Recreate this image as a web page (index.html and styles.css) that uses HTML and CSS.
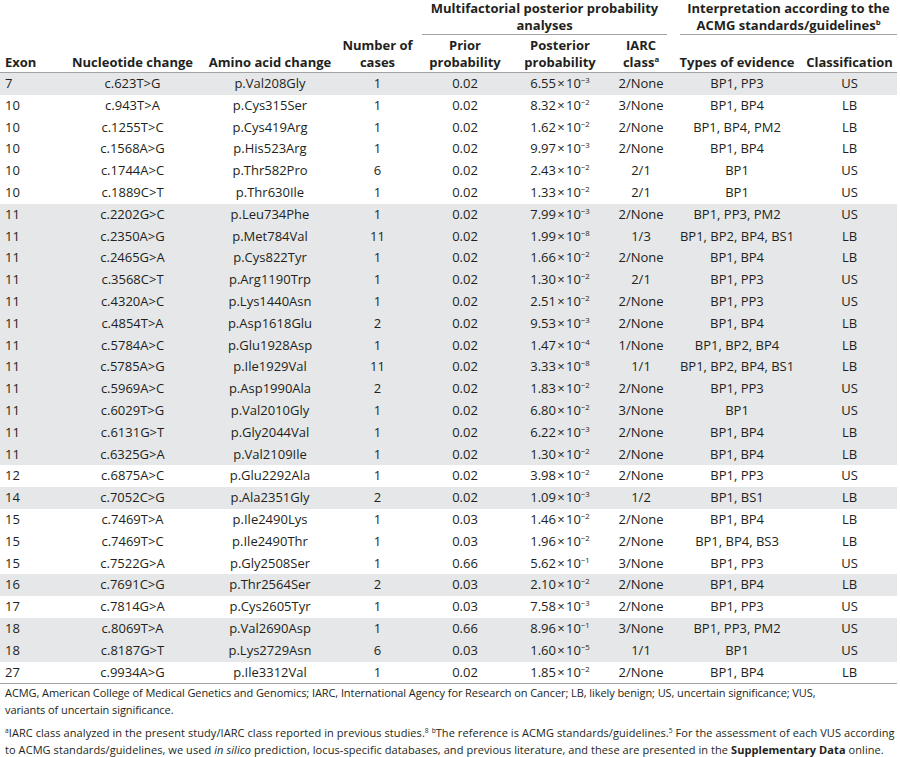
FILE: index.html
```html
<!DOCTYPE html>
<html lang="en">
<head>
<meta charset="utf-8">
<title>Table</title>
<link rel="stylesheet" href="styles.css">
</head>
<body>
<table class="tbl">
  <colgroup>
    <col class="c-exon"><col class="c-nuc"><col class="c-aa"><col class="c-num"><col class="c-prior"><col class="c-post"><col class="c-iarc"><col class="c-types"><col class="c-class">
  </colgroup>
  <thead>
    <tr class="hr1">
      <th rowspan="2" class="left bottom">Exon</th>
      <th rowspan="2" class="bottom">Nucleotide change</th>
      <th rowspan="2" class="bottom">Amino acid change</th>
      <th rowspan="2" class="bottom">Number of<br>cases</th>
      <th colspan="3" class="group"><div class="grp grp-multi">Multifactorial posterior probability<br>analyses</div></th>
      <th colspan="2" class="group"><div class="grp grp-interp">Interpretation according to the<br>ACMG standards/guidelines<sup>b</sup></div></th>
    </tr>
    <tr class="hr2">
      <th class="bottom">Prior<br>probability</th>
      <th class="bottom">Posterior<br>probability</th>
      <th class="bottom">IARC<br>class<sup>a</sup></th>
      <th class="bottom">Types of evidence</th>
      <th class="bottom">Classification</th>
    </tr>
  </thead>
  <tbody>
    <tr class="sh"><td class="left">7</td><td>c.623T&gt;G</td><td>p.Val208Gly</td><td>1</td><td>0.02</td><td>6.55&#8202;×&#8202;10<sup>−3</sup></td><td>2/None</td><td>BP1, PP3</td><td>US</td></tr>
    <tr><td class="left">10</td><td>c.943T&gt;A</td><td>p.Cys315Ser</td><td>1</td><td>0.02</td><td>8.32&#8202;×&#8202;10<sup>−2</sup></td><td>3/None</td><td>BP1, BP4</td><td>LB</td></tr>
    <tr><td class="left">10</td><td>c.1255T&gt;C</td><td>p.Cys419Arg</td><td>1</td><td>0.02</td><td>1.62&#8202;×&#8202;10<sup>−2</sup></td><td>2/None</td><td>BP1, BP4, PM2</td><td>LB</td></tr>
    <tr><td class="left">10</td><td>c.1568A&gt;G</td><td>p.His523Arg</td><td>1</td><td>0.02</td><td>9.97&#8202;×&#8202;10<sup>−3</sup></td><td>2/None</td><td>BP1, BP4</td><td>LB</td></tr>
    <tr><td class="left">10</td><td>c.1744A&gt;C</td><td>p.Thr582Pro</td><td>6</td><td>0.02</td><td>2.43&#8202;×&#8202;10<sup>−2</sup></td><td>2/1</td><td>BP1</td><td>US</td></tr>
    <tr><td class="left">10</td><td>c.1889C&gt;T</td><td>p.Thr630Ile</td><td>1</td><td>0.02</td><td>1.33&#8202;×&#8202;10<sup>−2</sup></td><td>2/1</td><td>BP1</td><td>US</td></tr>
    <tr class="sh"><td class="left">11</td><td>c.2202G&gt;C</td><td>p.Leu734Phe</td><td>1</td><td>0.02</td><td>7.99&#8202;×&#8202;10<sup>−3</sup></td><td>2/None</td><td>BP1, PP3, PM2</td><td>US</td></tr>
    <tr class="sh"><td class="left">11</td><td>c.2350A&gt;G</td><td>p.Met784Val</td><td>11</td><td>0.02</td><td>1.99&#8202;×&#8202;10<sup>−8</sup></td><td>1/3</td><td>BP1, BP2, BP4, BS1</td><td>LB</td></tr>
    <tr class="sh"><td class="left">11</td><td>c.2465G&gt;A</td><td>p.Cys822Tyr</td><td>1</td><td>0.02</td><td>1.66&#8202;×&#8202;10<sup>−2</sup></td><td>2/None</td><td>BP1, BP4</td><td>LB</td></tr>
    <tr class="sh"><td class="left">11</td><td>c.3568C&gt;T</td><td>p.Arg1190Trp</td><td>1</td><td>0.02</td><td>1.30&#8202;×&#8202;10<sup>−2</sup></td><td>2/1</td><td>BP1, PP3</td><td>US</td></tr>
    <tr class="sh"><td class="left">11</td><td>c.4320A&gt;C</td><td>p.Lys1440Asn</td><td>1</td><td>0.02</td><td>2.51&#8202;×&#8202;10<sup>−2</sup></td><td>2/None</td><td>BP1, PP3</td><td>US</td></tr>
    <tr class="sh"><td class="left">11</td><td>c.4854T&gt;A</td><td>p.Asp1618Glu</td><td>2</td><td>0.02</td><td>9.53&#8202;×&#8202;10<sup>−3</sup></td><td>2/None</td><td>BP1, BP4</td><td>LB</td></tr>
    <tr class="sh"><td class="left">11</td><td>c.5784A&gt;C</td><td>p.Glu1928Asp</td><td>1</td><td>0.02</td><td>1.47&#8202;×&#8202;10<sup>−4</sup></td><td>1/None</td><td>BP1, BP2, BP4</td><td>LB</td></tr>
    <tr class="sh"><td class="left">11</td><td>c.5785A&gt;G</td><td>p.Ile1929Val</td><td>11</td><td>0.02</td><td>3.33&#8202;×&#8202;10<sup>−8</sup></td><td>1/1</td><td>BP1, BP2, BP4, BS1</td><td>LB</td></tr>
    <tr class="sh"><td class="left">11</td><td>c.5969A&gt;C</td><td>p.Asp1990Ala</td><td>2</td><td>0.02</td><td>1.83&#8202;×&#8202;10<sup>−2</sup></td><td>2/None</td><td>BP1, PP3</td><td>US</td></tr>
    <tr class="sh"><td class="left">11</td><td>c.6029T&gt;G</td><td>p.Val2010Gly</td><td>1</td><td>0.02</td><td>6.80&#8202;×&#8202;10<sup>−2</sup></td><td>3/None</td><td>BP1</td><td>US</td></tr>
    <tr class="sh"><td class="left">11</td><td>c.6131G&gt;T</td><td>p.Gly2044Val</td><td>1</td><td>0.02</td><td>6.22&#8202;×&#8202;10<sup>−3</sup></td><td>2/None</td><td>BP1, BP4</td><td>LB</td></tr>
    <tr class="sh"><td class="left">11</td><td>c.6325G&gt;A</td><td>p.Val2109Ile</td><td>1</td><td>0.02</td><td>1.30&#8202;×&#8202;10<sup>−2</sup></td><td>2/None</td><td>BP1, BP4</td><td>LB</td></tr>
    <tr><td class="left">12</td><td>c.6875A&gt;C</td><td>p.Glu2292Ala</td><td>1</td><td>0.02</td><td>3.98&#8202;×&#8202;10<sup>−2</sup></td><td>2/None</td><td>BP1, PP3</td><td>US</td></tr>
    <tr class="sh"><td class="left">14</td><td>c.7052C&gt;G</td><td>p.Ala2351Gly</td><td>2</td><td>0.02</td><td>1.09&#8202;×&#8202;10<sup>−3</sup></td><td>1/2</td><td>BP1, BS1</td><td>LB</td></tr>
    <tr><td class="left">15</td><td>c.7469T&gt;A</td><td>p.Ile2490Lys</td><td>1</td><td>0.03</td><td>1.46&#8202;×&#8202;10<sup>−2</sup></td><td>2/None</td><td>BP1, BP4</td><td>LB</td></tr>
    <tr><td class="left">15</td><td>c.7469T&gt;C</td><td>p.Ile2490Thr</td><td>1</td><td>0.03</td><td>1.96&#8202;×&#8202;10<sup>−2</sup></td><td>2/None</td><td>BP1, BP4, BS3</td><td>LB</td></tr>
    <tr><td class="left">15</td><td>c.7522G&gt;A</td><td>p.Gly2508Ser</td><td>1</td><td>0.66</td><td>5.62&#8202;×&#8202;10<sup>−1</sup></td><td>3/None</td><td>BP1, PP3</td><td>US</td></tr>
    <tr class="sh"><td class="left">16</td><td>c.7691C&gt;G</td><td>p.Thr2564Ser</td><td>2</td><td>0.03</td><td>2.10&#8202;×&#8202;10<sup>−2</sup></td><td>2/None</td><td>BP1, BP4</td><td>LB</td></tr>
    <tr><td class="left">17</td><td>c.7814G&gt;A</td><td>p.Cys2605Tyr</td><td>1</td><td>0.03</td><td>7.58&#8202;×&#8202;10<sup>−3</sup></td><td>2/None</td><td>BP1, PP3</td><td>US</td></tr>
    <tr class="sh"><td class="left">18</td><td>c.8069T&gt;A</td><td>p.Val2690Asp</td><td>1</td><td>0.66</td><td>8.96&#8202;×&#8202;10<sup>−1</sup></td><td>3/None</td><td>BP1, PP3, PM2</td><td>US</td></tr>
    <tr class="sh"><td class="left">18</td><td>c.8187G&gt;T</td><td>p.Lys2729Asn</td><td>6</td><td>0.03</td><td>1.60&#8202;×&#8202;10<sup>−5</sup></td><td>1/1</td><td>BP1</td><td>US</td></tr>
    <tr><td class="left">27</td><td>c.9934A&gt;G</td><td>p.Ile3312Val</td><td>1</td><td>0.02</td><td>1.85&#8202;×&#8202;10<sup>−2</sup></td><td>2/None</td><td>BP1, BP4</td><td>LB</td></tr>
  </tbody>
</table>
<div class="notes">
  <p class="note">ACMG, American College of Medical Genetics and Genomics; IARC, International Agency for Research on Cancer; LB, likely benign; US, uncertain significance; VUS,<br>variants of uncertain significance.</p>
  <p class="note note-wide"><sup>a</sup>IARC class analyzed in the present study/IARC class reported in previous studies.<sup>8</sup> <sup>b</sup>The reference is ACMG standards/guidelines.<sup>5</sup> For the assessment of each VUS according<br>to ACMG standards/guidelines, we used <i>in silico</i> prediction, locus-specific databases, and previous literature, and these are presented in the <b>Supplementary Data</b> online.</p>
</div>
</body>
</html>
```
FILE: styles.css
```css
html, body {
  margin: 0;
  padding: 0;
  background: #ffffff;
}
body {
  font-family: "Open Sans", "Noto Sans", sans-serif;
  color: #231f20;
  width: 900px;
}
.tbl {
  width: 897px;
  table-layout: fixed;
  border-collapse: collapse;
  border-spacing: 0;
  font-size: 13px;
}
.c-exon { width: 60px; }
.c-nuc { width: 145px; }
.c-aa { width: 130px; }
.c-num { width: 85px; }
.c-prior { width: 90px; }
.c-post { width: 100px; }
.c-iarc { width: 62px; }
.c-types { width: 130px; }
.c-class { width: 95px; }

th {
  font-weight: 700;
  line-height: 17px;
  padding: 0;
  text-align: center;
  white-space: nowrap;
}
th.left, td.left {
  text-align: left;
  padding-left: 5px;
}
.hr1 th { height: 36px; }
.hr2 th { height: 35px; }
th.bottom {
  vertical-align: bottom;
  padding-bottom: 1px;
}
th.group {
  vertical-align: top;
  padding: 0;
}
.grp {
  border-bottom: 1px solid #a3a3a3;
  height: 35px;
  padding-top: 0;
  box-sizing: border-box;
}
.grp-multi { margin: 0 5px 0 2px; }
.grp-interp { margin: 0 0 0 8px; }
thead tr.hr2 th,
thead tr.hr1 th[rowspan] {
  border-bottom: 1px solid #a3a3a3;
}
td {
  line-height: 21.8px;
  height: 21.8px;
  padding: 0;
  text-align: center;
  white-space: nowrap;
}
tr.sh td { background: #e6e7e9; }
tbody tr:last-child td { border-bottom: 1px solid #a3a3a3; }

sup {
  font-size: 0.6em;
  line-height: 0;
  vertical-align: 0.6em;
}
.notes {
  font-size: 11px;
  letter-spacing: -0.08px;
  line-height: 16.5px;
  padding: 1px 0 0 5px;
  white-space: nowrap;
}
.note { margin: 0 0 7px 0; }
.note-wide { letter-spacing: 0.07px; }
```
